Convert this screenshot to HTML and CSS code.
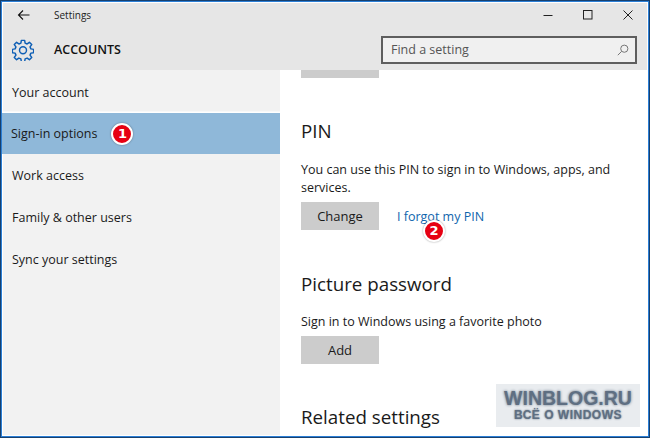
FILE: index.html
```html
<!DOCTYPE html>
<html lang="en">
<head>
<meta charset="utf-8">
<title>Settings</title>
<link rel="stylesheet" href="styles.css">
</head>
<body>
<div class="window">
  <div class="frame">
  <header class="header">
    <div class="titlebar">
      <svg class="back" width="14" height="12" viewBox="0 0 14 12"><path d="M12.5 6H1.5M6 1.5L1.5 6L6 10.5" fill="none" stroke="#111" stroke-width="1.1"/></svg>
      <span class="app-title">Settings</span>
      <div class="controls">
        <svg width="10" height="10" viewBox="0 0 10 10"><path d="M0.5 5.5H9.5" stroke="#222" stroke-width="1"/></svg>
        <svg width="10" height="10" viewBox="0 0 10 10"><rect x="0.5" y="0.5" width="8.5" height="8.5" fill="none" stroke="#222" stroke-width="1"/></svg>
        <svg width="10" height="10" viewBox="0 0 10 10"><path d="M0.5 0.5L9.5 9.5M9.5 0.5L0.5 9.5" stroke="#222" stroke-width="1"/></svg>
      </div>
    </div>
    <div class="headbar">
      <svg class="gear" width="22" height="22" viewBox="0 0 24 24"><path d="M10.2 1.5h3.6l.5 3 2.2.9 2.5-1.8 2.5 2.5-1.8 2.5.9 2.2 3 .5v3.6l-3 .5-.9 2.2 1.8 2.5-2.5 2.5-2.5-1.8-2.2.9-.5 3h-3.6l-.5-3-2.2-.9-2.5 1.8-2.5-2.5 1.8-2.5-.9-2.2-3-.5v-3.6l3-.5.9-2.2-1.8-2.5 2.5-2.5 2.5 1.8 2.2-.9z" fill="none" stroke="#0f5fb5" stroke-width="1.6" stroke-linejoin="round"/><circle cx="12" cy="12.2" r="3.8" fill="none" stroke="#0f5fb5" stroke-width="1.6"/></svg>
      <span class="section-title">ACCOUNTS</span>
      <div class="search">
        <span class="search-text">Find a setting</span>
        <svg width="12" height="12" viewBox="0 0 12 12"><circle cx="7.3" cy="4.7" r="3.6" fill="none" stroke="#777" stroke-width="1"/><path d="M4.6 7.4L0.8 11.2" stroke="#777" stroke-width="1"/></svg>
      </div>
    </div>
  </header>
  <div class="main">
    <nav class="sidebar">
      <div class="nav-item first">Your account</div>
      <div class="nav-item selected">Sign-in options<span class="badge badge-inline">1</span></div>
      <div class="nav-item">Work access</div>
      <div class="nav-item">Family &amp; other users</div>
      <div class="nav-item">Sync your settings</div>
    </nav>
    <section class="content">
      <div class="btn btn-cut"></div>
      <h2 class="heading heading-pin">PIN</h2>
      <p class="text">You can use this PIN to sign in to Windows, apps, and services.</p>
      <div class="actions">
        <div class="btn">Change</div>
        <a class="link">I forgot my PIN</a>
        <span class="badge badge-over">2</span>
      </div>
      <h2 class="heading heading-pic">Picture password</h2>
      <p class="text text-pic">Sign in to Windows using a favorite photo</p>
      <div class="btn">Add</div>
      <h2 class="heading heading-rel">Related settings</h2>
    </section>
  </div>
  </div>
  <div class="watermark">
    <div class="wm-big">WINBLOG.RU</div>
    <div class="wm-small">ВСЁ О WINDOWS</div>
  </div>
</div>
</body>
</html>
```
FILE: styles.css
```css
* { box-sizing: border-box; }
html, body { margin: 0; padding: 0; }
body { width: 650px; height: 438px; overflow: hidden; background: #fff; font-family: "Open Sans", "Noto Sans", sans-serif; color: #1a1a1a; }
.window { position: relative; width: 650px; height: 438px; border: 1px solid #17406e; background: #fff; overflow: hidden; }
.frame { width: 100%; height: 100%; border: 1px solid #2b7fd6; padding: 1px; background: #fff; display: flex; flex-direction: column; }
.header { background: #e6e6e6; height: 67px; flex: none; }
.titlebar { height: 24px; display: flex; align-items: center; padding-left: 14px; }
.back { flex: none; }
.app-title { margin-left: 23px; font-size: 10px; color: #222; }
.controls { margin-left: auto; margin-right: 14px; display: flex; gap: 30px; }
.headbar { height: 42px; display: flex; align-items: center; padding: 3px 0 0 9px; }
.gear { flex: none; }
.section-title { margin-left: 20px; font-size: 12.5px; font-weight: 600; color: #111; }
.search { margin-left: auto; margin-right: 10px; width: 256px; height: 28px; border: 2px solid #5e5e5e; background: #f0f0f0; display: flex; align-items: center; justify-content: space-between; padding: 0 6px 0 8px; }
.search-text { font-size: 12.5px; color: #555; }
.main { flex: 1; display: flex; min-height: 0; }
.sidebar { width: 277px; flex: none; background: #f2f2f2; padding-top: 1px; }
.nav-item { height: 42px; line-height: 42px; padding-left: 9px; font-size: 12.5px; color: #1a1a1a; }
.first { padding-top: 1px; }
.selected { background: #8fb8d9; display: flex; align-items: center; height: 41px; margin: 0 0 1px -1px; box-shadow: 0 -1.5px 0 #fff; }
.badge { width: 22px; height: 22px; border-radius: 50%; background: #e60012; border: 2px solid #fff; color: #fff; font-size: 13px; font-weight: 800; line-height: 18px; text-align: center; font-family: "DejaVu Sans", sans-serif; box-shadow: 0 0 2px rgba(0,0,0,.4); display: block; flex: none; }
.badge-inline { margin-left: 14px; }
.content { flex: 1; padding-left: 21px; overflow: hidden; }
.heading { margin: 0; font-weight: 400; font-size: 18.75px; line-height: 24px; color: #1a1a1a; }
.heading-pin { margin-top: 41px; }
.heading-pic { margin-top: 42px; }
.heading-rel { margin-top: 41px; }
.text { margin: 18px 0 0; width: 330px; font-size: 12.5px; line-height: 18px; }
.text-pic { margin-top: 17px; }
.actions { position: relative; display: flex; align-items: center; margin-top: 5px; }
.btn { width: 78px; height: 28px; background: #ccc; display: flex; align-items: center; justify-content: center; font-size: 13px; color: #1a1a1a; }
.text + .btn { margin-top: 5px; }
.btn-cut { height: 8px; }
.link { margin-left: 18px; font-size: 12.5px; color: #0f65ad; }
.badge-over { position: absolute; left: 122px; top: 18px; }
.watermark { position: absolute; right: 9px; bottom: 10px; width: 144px; height: 43px; background: #e9ecef; text-align: center; color: #5f6f82; font-family: "Liberation Sans", sans-serif; font-weight: 700; padding-top: 3px; }
.wm-big { font-size: 19.5px; line-height: 22px; text-shadow: 0 0 3px #5f6f82; }
.wm-small { font-size: 12px; line-height: 14px; letter-spacing: .5px; margin-top: -1px; text-shadow: 0 0 2px #5f6f82; }
```
